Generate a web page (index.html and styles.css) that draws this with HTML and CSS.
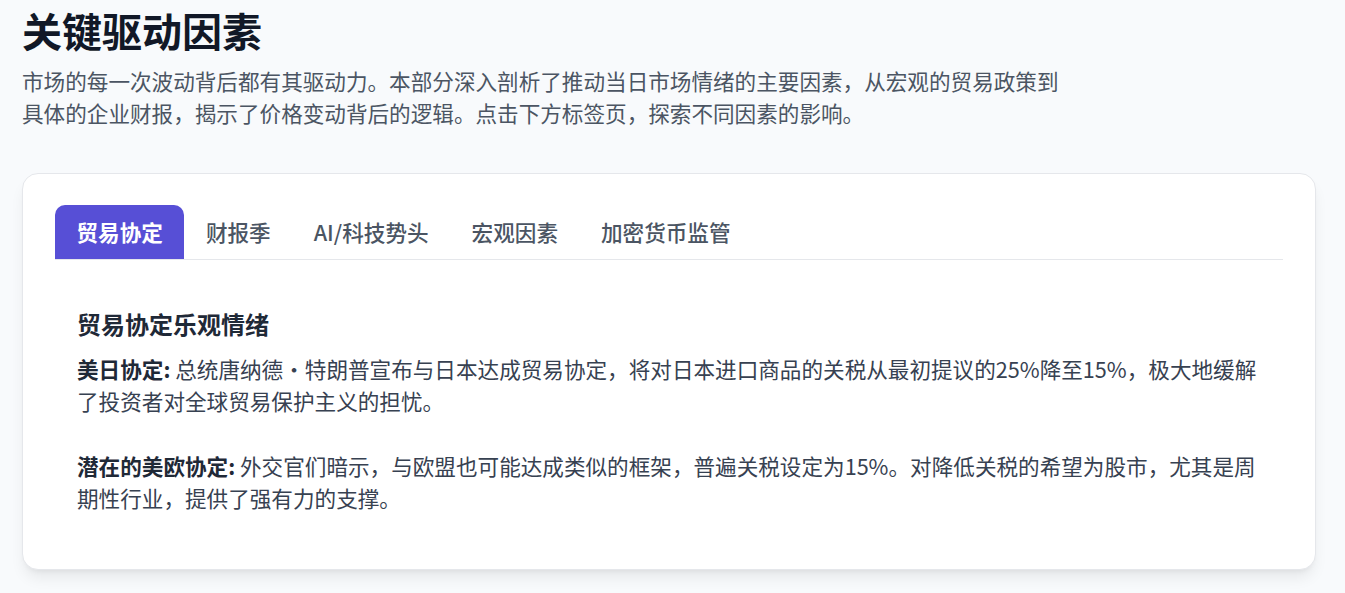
FILE: index.html
```html
<!DOCTYPE html>
<html lang="zh-CN">
<head>
<meta charset="utf-8">
<title>关键驱动因素</title>
<link rel="stylesheet" href="styles.css">
</head>
<body>
<section class="section">
  <h2 class="title">关键驱动因素</h2>
  <p class="intro">市场的每一次波动背后都有其驱动力。本部分深入剖析了推动当日市场情绪的主要因素，从宏观的贸易政策到具体的企业财报，揭示了价格变动背后的逻辑。点击下方标签页，探索不同因素的影响。</p>
  <div class="card">
    <div class="tabs">
      <button class="tab active">贸易协定</button>
      <button class="tab">财报季</button>
      <button class="tab">AI/科技势头</button>
      <button class="tab">宏观因素</button>
      <button class="tab">加密货币监管</button>
    </div>
    <div class="panel">
      <h3 class="panel-title">贸易协定乐观情绪</h3>
      <p class="panel-text"><strong>美日协定:</strong> 总统唐纳德・特朗普宣布与日本达成贸易协定，将对日本进口商品的关税从最初提议的25%降至15%，极大地缓解了投资者对全球贸易保护主义的担忧。</p>
      <p class="panel-text"><strong>潜在的美欧协定:</strong> 外交官们暗示，与欧盟也可能达成类似的框架，普遍关税设定为15%。对降低关税的希望为股市，尤其是周期性行业，提供了强有力的支撑。</p>
    </div>
  </div>
</section>
</body>
</html>
```

FILE: styles.css
```css
* { box-sizing: border-box; }
html, body { margin: 0; padding: 0; }
body {
  background: #f8fafc;
  font-family: "Noto Sans CJK SC", "Noto Sans", sans-serif;
  color: #1f2937;
}
.section {
  padding: 6px 29px 24px 22px;
}
.title {
  margin: 0;
  font-size: 40px;
  line-height: 48px;
  font-weight: 700;
  color: #111827;
}
.intro {
  margin: 11px 0 0;
  max-width: 1045px;
  font-size: 21.6px;
  line-height: 32px;
  color: #4b5563;
}
.card {
  margin-top: 44px;
  background: #ffffff;
  border: 1px solid #e5e7eb;
  border-radius: 16px;
  box-shadow: 0 10px 15px -3px rgba(0,0,0,0.08), 0 4px 6px -4px rgba(0,0,0,0.08);
  padding: 31px 32px 33px 32px;
}
.tabs {
  display: flex;
  border-bottom: 1px solid #e5e7eb;
}
.tab {
  font-family: inherit;
  font-size: 21.6px;
  line-height: 54px;
  height: 54px;
  padding: 0 21.5px;
  border: none;
  background: transparent;
  color: #4b5563;
  font-weight: 500;
  border-radius: 10px 10px 0 0;
  cursor: pointer;
}
.tab.active {
  background: #574fd6;
  color: #ffffff;
  font-weight: 600;
}
.panel {
  padding: 48px 22px 22px 22px;
}
.panel-title {
  margin: 0;
  font-size: 24px;
  line-height: 32px;
  font-weight: 700;
  color: #1f2937;
}
.panel-text {
  margin: 13px 0 0;
  font-size: 21.6px;
  line-height: 32px;
  color: #374151;
}
.panel-text + .panel-text {
  margin-top: 33px;
}
.panel-text strong {
  font-weight: 700;
  color: #1f2937;
}
```
